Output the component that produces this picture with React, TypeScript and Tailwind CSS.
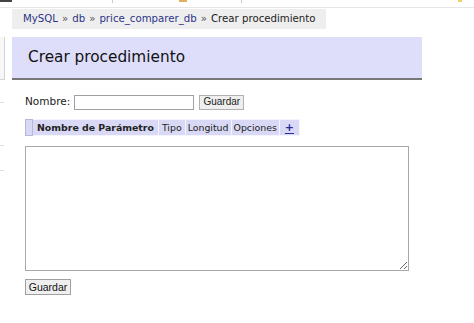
export default function App() {
  return (
    <div className="relative w-[474px] h-[323px] overflow-hidden bg-white font-['DejaVu_Sans',sans-serif] text-[#222]">
      {/* browser/top strip remnants */}
      <div className="flex h-[8px] items-start border-b border-[#e6e6e6]">
        <div className="h-[2px] w-[12px] bg-[#444]" />
        <div className="ml-[100px] h-[3px] w-px bg-[#ccc]" />
        <div className="ml-[66px] h-[2px] w-[8px] bg-[#e0b060]" />
        <div className="ml-[54px] h-[3px] w-px bg-[#ccc]" />
        <div className="ml-[216px] h-[2px] w-[4px] bg-[#f0d060]" />
      </div>

      <div className="flex">
        {/* sidebar edge */}
        <div className="w-[12px] shrink-0">
          <div className="mt-[29px] h-[43px] w-[5px] border-r border-b border-[#d4d4d4] bg-[#f7f7f7]" />
          <div className="mt-[22px] h-px w-[4px] bg-[#ddd]" />
          <div className="mt-[42px] h-px w-[4px] bg-[#ddd]" />
          <div className="mt-[24px] h-px w-[4px] bg-[#ddd]" />
        </div>

        <div className="flex-1">
          {/* breadcrumb */}
          <div className="mt-px flex h-[20px] w-[314px] items-center whitespace-nowrap bg-[#eeeeee] pl-[11px] text-[10.2px] text-[#222]">
            <span className="text-[#2d3588]">MySQL</span>
            <span className="mx-[4px] text-[#555]">»</span>
            <span className="text-[#2d3588]">db</span>
            <span className="mx-[4px] text-[#555]">»</span>
            <span className="text-[#2d3588]">price_comparer_db</span>
            <span className="mx-[4px] text-[#555]">»</span>
            <span>Crear procedimiento</span>
          </div>

          {/* heading */}
          <div className="mt-[8px] flex h-[43px] w-[410px] items-center border-b-2 border-[#777] bg-[#dedefb] pl-[16px] text-[15.3px] text-[#111]">
            Crear procedimiento
          </div>

          <div className="pl-[13px]">
            <div className="mt-[14px] flex h-[16px] items-center text-[10.5px]">
              <span>Nombre:</span>
              <input
                className="ml-[4px] h-[15px] w-[120px] border border-[#a0a0a0] bg-white"
                type="text"
              />
              <button className="ml-[5px] h-[15px] w-[45px] border border-[#b0b0b0] bg-[#efefef] font-['Liberation_Sans',sans-serif] text-[10px] leading-none text-[#222]">
                Guardar
              </button>
            </div>

            <table className="mt-[9px] border-collapse border border-[#eaeaf8] text-[9.4px] leading-[14px]">
              <thead>
                <tr className="h-[16px] bg-[#d9d9f6]">
                  <th className="w-[7px] border border-[#b8b8d8] p-0" />
                  <th className="border border-[#f4f4ff] px-[4px] py-0 font-bold">
                    Nombre de Parámetro
                  </th>
                  <th className="border border-[#f4f4ff] px-[3px] py-0 font-normal">Tipo</th>
                  <th className="border border-[#f4f4ff] px-[2px] py-0 font-normal">Longitud</th>
                  <th className="border border-[#f4f4ff] px-[2px] py-0 font-normal">Opciones</th>
                  <th className="w-[20px] border border-[#f4f4ff] px-[3px] py-0 text-[11px] font-bold leading-[12px] text-[#2a2a9a]">
                    <span className="inline-block border-b border-[#2a2a9a] leading-[10px]">+</span>
                  </th>
                </tr>
              </thead>
            </table>

            <textarea className="mt-[10px] block h-[125px] w-[384px] resize border border-[#a8a8a8] bg-white" />

            <button className="mt-[8px] block h-[16px] w-[46px] border border-[#a0a0a0] bg-[#efefef] font-['Liberation_Sans',sans-serif] text-[10.5px] leading-none text-[#111]">
              Guardar
            </button>
          </div>
        </div>
      </div>
    </div>
  );
}
